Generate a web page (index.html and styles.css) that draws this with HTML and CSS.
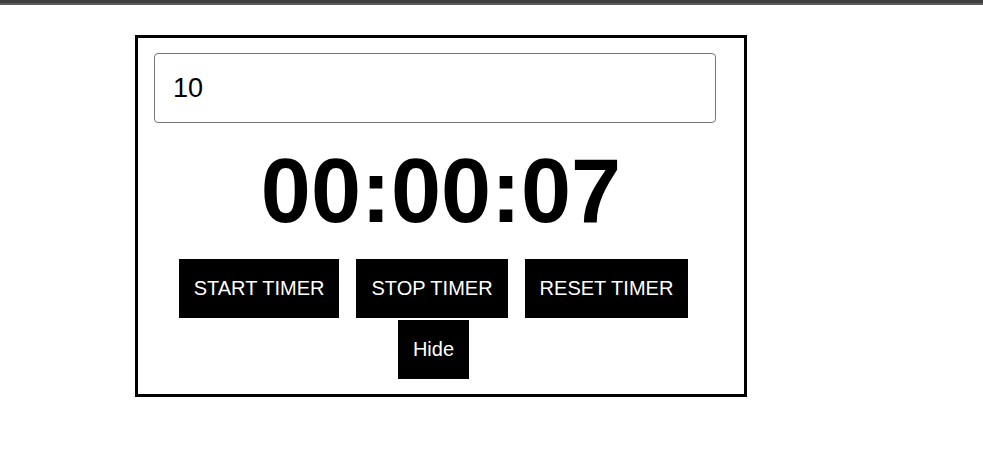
FILE: index.html
```html
<!DOCTYPE html>
<html>
<head>
<meta charset="utf-8">
<link rel="stylesheet" href="styles.css">
</head>
<body>
<div class="topbar"></div>
<div class="timer-card">
  <input class="minutes-input" type="text" value="10">
  <div class="time-display">00:00:07</div>
  <div class="controls">
    <button class="btn">START TIMER</button>
    <button class="btn">STOP TIMER</button>
    <button class="btn">RESET TIMER</button>
    <button class="btn">Hide</button>
  </div>
</div>
</body>
</html>
```
FILE: styles.css
```css
html, body {
  margin: 0;
  padding: 0;
  background: #ffffff;
  font-family: "Liberation Sans", Arial, sans-serif;
}

.topbar {
  height: 3px;
  background: #3f3f3f;
  border-bottom: 2px solid #5c5c5c;
}

.timer-card {
  width: 606px;
  margin: 30px 0 0 135px;
  border: 3px solid #000000;
  padding: 15px 0 15px 0;
  display: flex;
  flex-direction: column;
}

.minutes-input {
  box-sizing: border-box;
  width: 562px;
  height: 70px;
  margin-left: 16px;
  border: 1px solid #767676;
  border-radius: 4px;
  padding: 0 18px;
  font-family: "Liberation Sans", Arial, sans-serif;
  font-size: 27px;
  color: #000000;
  outline: none;
}

.time-display {
  margin-top: 18px;
  height: 100px;
  line-height: 100px;
  font-size: 90px;
  font-weight: bold;
  text-align: center;
  color: #000000;
}

.controls {
  margin-top: 18px;
  padding: 0 16px;
  display: flex;
  flex-wrap: wrap;
  justify-content: center;
  column-gap: 2px;
  row-gap: 2px;
}

.btn {
  margin: 0 15px 0 0;
  background: #000000;
  color: #ffffff;
  border: none;
  border-radius: 0;
  padding: 18px 15px;
  font-family: "Liberation Sans", Arial, sans-serif;
  font-size: 20px;
  line-height: 23px;
}
```
